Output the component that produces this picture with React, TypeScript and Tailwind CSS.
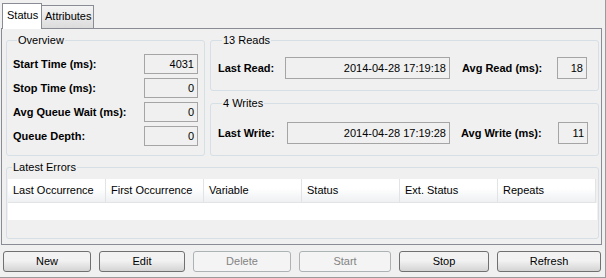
const font = "font-['Liberation_Sans',Arial,sans-serif]";

const overviewRows = [
  { label: "Start Time (ms):", value: "4031" },
  { label: "Stop Time (ms):", value: "0" },
  { label: "Avg Queue Wait (ms):", value: "0" },
  { label: "Queue Depth:", value: "0" },
];

const columns = [
  "Last Occurrence",
  "First Occurrence",
  "Variable",
  "Status",
  "Ext. Status",
  "Repeats",
];

const buttons = [
  { text: "New", w: "w-[88px]", disabled: false },
  { text: "Edit", w: "w-[86px]", disabled: false },
  { text: "Delete", w: "w-[98px]", disabled: true },
  { text: "Start", w: "w-[92px]", disabled: true },
  { text: "Stop", w: "w-[90px]", disabled: false },
  { text: "Refresh", w: "w-[104px]", disabled: false },
];

const Field = ({ value, className }: { value: string; className: string }) => (
  <div
    className={`${className} flex items-center justify-end border border-[#a5a5a5] bg-[#f0f0f0] pr-[3px]`}
  >
    {value}
  </div>
);

const Legend = ({ text }: { text: string }) => (
  <legend className="ml-[4px] px-[1px] leading-[13px]">{text}</legend>
);

export default function App() {
  return (
    <div
      className={`${font} text-[11px] text-black w-[606px] h-[278px] bg-[#f0f0f0] border-r border-b border-[#9a9a9a] pt-[3px] pl-[1px] overflow-hidden`}
    >
      {/* tabs */}
      <div className="flex items-end h-[25px]">
        <div className="relative z-10 ml-[1px] w-[40px] h-[26px] -mb-[1px] bg-white border border-b-0 border-[#898c95] pl-[4px] pt-[5px] leading-[13px]">
          Status
        </div>
        <div className="w-[52px] h-[23px] border border-l-0 border-b-0 border-[#898c95] bg-gradient-to-b from-[#f4f4f4] to-[#dcdcdc] pl-[3px] pt-[4px] leading-[13px]">
          Attributes
        </div>
      </div>

      {/* pane */}
      <div className="w-[601px] h-[217px] border border-[#898c95] pt-[5px] pl-[4px] pr-[2px] pb-[5px] flex flex-col gap-[5px]">
        <div className="flex gap-[5px] h-[122px]">
          <fieldset className="w-[199px] h-[122px] border border-[#d5dfe5] rounded-[3px] px-[6px]">
            <Legend text="Overview" />
            <div className="pt-[7px] flex flex-col gap-[4px]">
              {overviewRows.map((r) => (
                <div key={r.label} className="flex items-center justify-between h-[20px]">
                  <span className="font-bold">{r.label}</span>
                  <Field value={r.value} className="w-[54px] h-[20px]" />
                </div>
              ))}
            </div>
          </fieldset>

          <div className="w-[389px] flex flex-col gap-[6px]">
            <fieldset className="h-[57px] border border-[#d5dfe5] rounded-[3px] pl-[7px]">
              <Legend text="13 Reads" />
              <div className="pt-[10px] flex items-center h-[32px]">
                <span className="font-bold w-[67px]">Last Read:</span>
                <Field value="2014-04-28 17:19:18" className="w-[165px] h-[22px]" />
                <span className="font-bold ml-[12px] w-[95px]">Avg Read (ms):</span>
                <Field value="18" className="w-[30px] h-[22px]" />
              </div>
            </fieldset>
            <fieldset className="h-[59px] border border-[#d5dfe5] rounded-[3px] pl-[7px]">
              <Legend text="4 Writes" />
              <div className="pt-[12px] flex items-center h-[34px]">
                <span className="font-bold w-[69px]">Last Write:</span>
                <Field value="2014-04-28 17:19:28" className="w-[163px] h-[22px]" />
                <span className="font-bold ml-[11px] w-[97px]">Avg Write (ms):</span>
                <Field value="11" className="w-[30px] h-[22px]" />
              </div>
            </fieldset>
          </div>
        </div>

        <fieldset className="h-[78px] border border-[#d5dfe5] rounded-[3px] px-[1px]">
          <Legend text="Latest Errors" />
          <div className="pt-[5px]">
            <div className="flex h-[24px]">
              {columns.map((c) => (
                <div
                  key={c}
                  className="w-[98px] flex items-center pl-[5px] border-r border-b border-[#e2e3e5] bg-gradient-to-b from-white from-40% to-[#eef0f2]"
                >
                  {c}
                </div>
              ))}
            </div>
            <div className="h-[17px] bg-white" />
          </div>
        </fieldset>
      </div>

      {/* buttons */}
      <div className="flex gap-[8px] mt-[6px] pl-[2px]">
        {buttons.map((b) =>
          b.disabled ? (
            <div
              key={b.text}
              className={`${b.w} h-[21px] rounded-[3px] border border-[#adb2b5] bg-[#f4f4f4] text-[#838383] flex items-center justify-center`}
            >
              {b.text}
            </div>
          ) : (
            <div
              key={b.text}
              className={`${b.w} h-[21px] rounded-[3px] border border-[#707070] bg-gradient-to-b from-[#f2f2f2] from-45% to-[#d4d4d4] flex items-center justify-center`}
            >
              {b.text}
            </div>
          )
        )}
      </div>
    </div>
  );
}
